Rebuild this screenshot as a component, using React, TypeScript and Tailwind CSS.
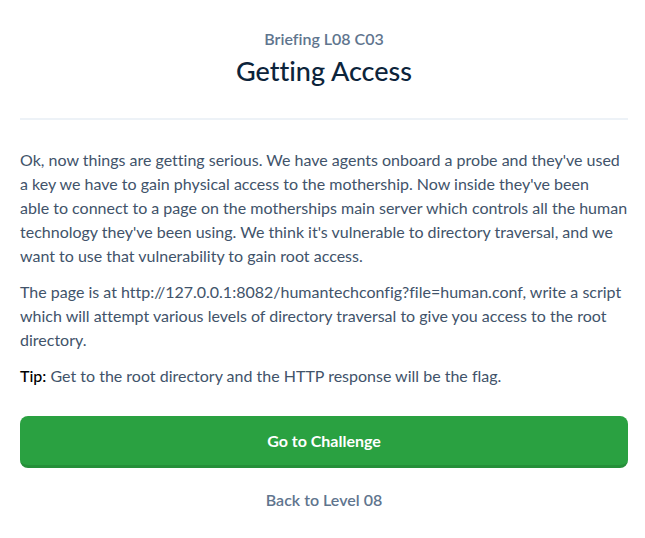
export default function App() {
  return (
    <main className="min-h-screen bg-white pt-7 pr-[17px] pb-6 pl-5 font-['Lato','Open_Sans',sans-serif] text-base leading-6 text-[#41536a] [font-variant-ligatures:none]">
      <header className="border-b-2 border-[#edf2f7] pb-[30px] text-center">
        <p className="leading-[22px] font-semibold text-[#5f758e]">Briefing L08 C03</p>
        <h1 className="mt-1 text-[27px] leading-[34px] font-medium text-[#0c243b]">Getting Access</h1>
      </header>
      <section className="mt-7 space-y-3">
        <p>
          Ok, now things are getting serious. We have agents onboard a probe and they've used a key we have to gain
          physical access to the mothership. Now inside they've been
          <br />
          able to connect to a page on the motherships main server which controls all the human technology they've been
          using. We think it's vulnerable to directory traversal, and we want to use that vulnerability to gain root
          access.
        </p>
        <p>
          The page is at http://127.0.0.1:8082/humantechconfig?file=human.conf, write a script which will attempt
          various levels of directory traversal to give you access to the root directory.
        </p>
        <p>
          <strong className="font-medium text-black">Tip:</strong> Get to the root directory and the HTTP response will
          be the flag.
        </p>
      </section>
      <button
        type="button"
        className="mt-7 h-[52px] w-full rounded-lg border-b-3 border-[#258f39] bg-[#2aa141] font-bold text-white"
      >
        Go to Challenge
      </button>
      <nav className="mt-5 text-center">
        <a href="#level-08" className="font-semibold text-[#5f758e]">
          Back to Level 08
        </a>
      </nav>
    </main>
  );
}
